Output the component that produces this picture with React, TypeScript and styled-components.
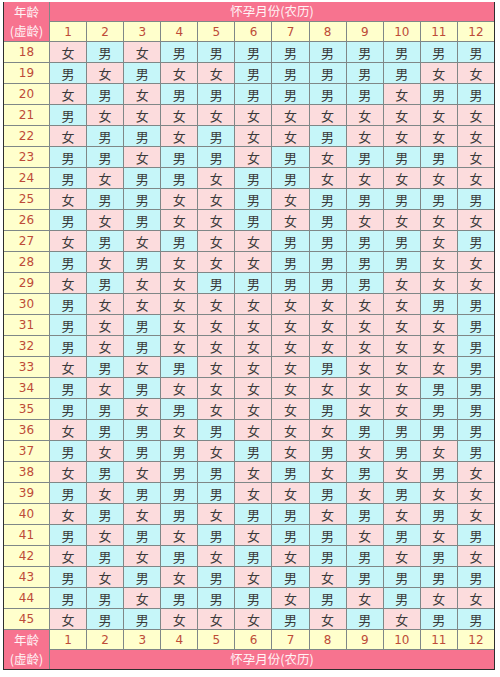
import React from "react";
import styled, { createGlobalStyle } from "styled-components";

const GlobalStyle = createGlobalStyle`
  html, body {
    margin: 0;
    padding: 0;
    background: #ffffff;
  }
  body {
    font-family: "Noto Sans CJK SC", "DejaVu Sans", sans-serif;
  }
`;

const Page = styled.div`
  padding: 2px 0 0 3px;
`;

const Chart = styled.div`
  width: 492px;
  box-sizing: border-box;
  display: grid;
  grid-template-columns: 45px repeat(12, 1fr);
  grid-template-rows: 19px 19px repeat(28, 20px) 19px 19px;
  gap: 1px;
  background: #7f8787;
  border: 1px solid #2e2e2e;
  border-top: none;
  font-size: 13px;
  line-height: 1;
`;

const Cell = styled.div`
  display: flex;
  align-items: center;
  justify-content: center;
`;

const AgeHeader = styled(Cell)`
  grid-row: span 2;
  background: #f7738f;
  color: #fff4f6;
  flex-direction: column;
  justify-content: space-around;
  padding: 1px 0;
  font-size: 12.5px;
`;

const MonthTitle = styled(Cell)`
  grid-column: span 12;
  background: #f7738f;
  color: #fff4f6;
  font-size: 12.5px;
`;

const NumberCell = styled(Cell)`
  background: #ffffcc;
  color: #bd4b38;
  font-family: "DejaVu Sans", "Noto Sans CJK SC", sans-serif;
  font-size: 12px;
`;

const ResultCell = styled(Cell)<{ $boy: boolean }>`
  background: ${(p) => (p.$boy ? "#c6f6f9" : "#fcdcdd")};
  color: #3a3a3a;
  font-size: 13px;
`;

const data: string[] = [
  "女男女男男男男男男男男男",
  "男女男女女男男男男男女女",
  "女男女男男男男男男女男男",
  "男女女女女女女女女女女女",
  "女男男女男女女男女女女女",
  "男男女男男女男女男男男女",
  "男女男男女男男女女女女女",
  "女男男女女男女男男男男男",
  "男女男女女男女男女女女女",
  "女男女男女女男男男男女男",
  "男女男女女女男男男男女女",
  "女男女女男男男男男女女女",
  "男女女女女女女女女女男男",
  "男女男女女女女女女女女男",
  "男女男女女女女女女女女男",
  "女男女男女女女男女女女男",
  "男女男女女女女女女女男男",
  "男男女男女女女男女女男男",
  "女男男女男女女女男男男男",
  "男女男男女男女男女男女男",
  "女男女男男女男女男女男女",
  "男女男男男女女男女男女女",
  "女男女男女男男女男女男女",
  "男女男女男女男男女男女男",
  "女男女男女男女男男女男女",
  "男女男女男女男女男男男男",
  "男男女男男男女男女男女女",
  "女男男女女女男女男女男男",
];

const months = Array.from({ length: 12 }, (_, i) => i + 1);

function AgeLabel() {
  return (
    <AgeHeader>
      <span>年龄</span>
      <span>(虚龄)</span>
    </AgeHeader>
  );
}

export default function App() {
  return (
    <Page>
      <GlobalStyle />
      <Chart>
        <AgeLabel />
        <MonthTitle>怀孕月份(农历)</MonthTitle>
        {months.map((m) => (
          <NumberCell key={`h${m}`}>{m}</NumberCell>
        ))}
        {data.map((row, r) => (
          <React.Fragment key={r}>
            <NumberCell>{18 + r}</NumberCell>
            {Array.from(row).map((ch, c) => (
              <ResultCell key={c} $boy={ch === "男"}>
                {ch}
              </ResultCell>
            ))}
          </React.Fragment>
        ))}
        <AgeLabel />
        {months.map((m) => (
          <NumberCell key={`f${m}`}>{m}</NumberCell>
        ))}
        <MonthTitle>怀孕月份(农历)</MonthTitle>
      </Chart>
    </Page>
  );
}
